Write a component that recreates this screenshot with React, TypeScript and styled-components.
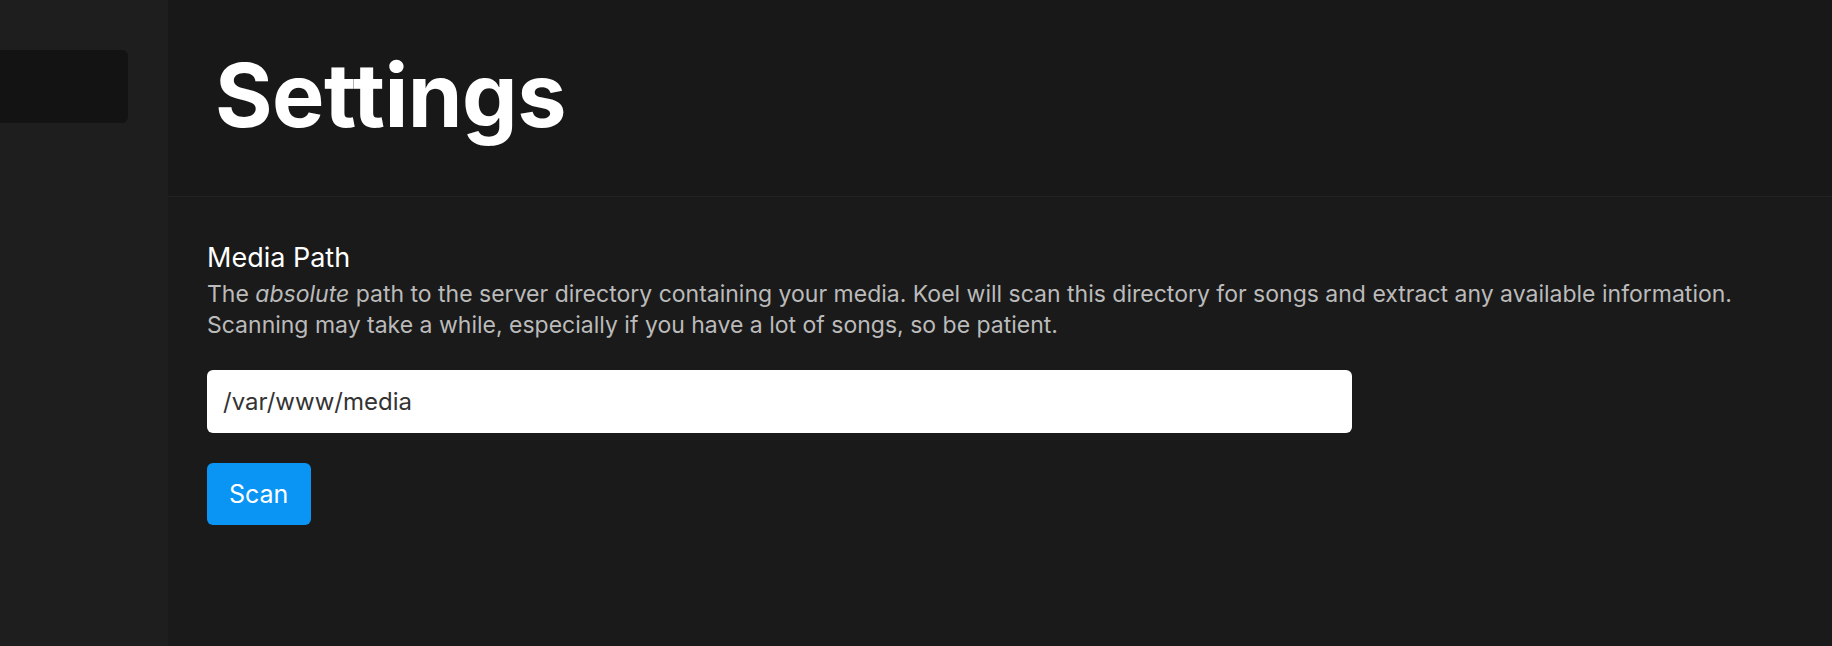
import React from "react";
import styled, { createGlobalStyle } from "styled-components";

const GlobalStyle = createGlobalStyle`
  * {
    box-sizing: border-box;
  }
  html, body {
    margin: 0;
    padding: 0;
    background: #1a1a1a;
  }
  body {
    font-family: Inter, "Noto Sans", sans-serif;
    -webkit-font-smoothing: antialiased;
  }
`;

const Layout = styled.div`
  display: flex;
  height: 100vh;
  overflow: hidden;
`;

const Sidebar = styled.aside`
  width: 168px;
  flex-shrink: 0;
  background: #1e1e1e;
  padding-top: 50px;
`;

const SearchBox = styled.div`
  width: 128px;
  height: 73px;
  background: #131313;
  border-radius: 0 6px 6px 0;
`;

const Main = styled.main`
  flex: 1;
  display: flex;
  flex-direction: column;
  background: #1a1a1a;
`;

const Header = styled.header`
  height: 197px;
  display: flex;
  align-items: center;
  padding-left: 47px;
  background: #181818;
  border-bottom: 1px solid #232323;
`;

const Title = styled.h1`
  margin: 0;
  color: #ffffff;
  font-size: 88px;
  font-weight: 700;
  letter-spacing: -0.5px;
  line-height: 1;
  padding-bottom: 6px;
`;

const Content = styled.section`
  padding: 42px 39px;
`;

const Label = styled.label`
  display: block;
  color: #ffffff;
  font-size: 27px;
  font-weight: 400;
  line-height: 37px;
`;

const Help = styled.p`
  margin: 0;
  padding-top: 3px;
  color: #bbbbbb;
  font-size: 23px;
  line-height: 31px;

  em {
    font-style: italic;
  }
`;

const PathInput = styled.input`
  display: block;
  width: 1145px;
  height: 63px;
  margin-top: 29px;
  padding: 0 16px;
  border: 0;
  border-radius: 6px;
  background: #ffffff;
  color: #333333;
  font-family: Inter, "Noto Sans", sans-serif;
  font-size: 24px;
  outline: none;
`;

const Button = styled.button`
  display: block;
  margin-top: 30px;
  height: 62px;
  padding: 0 23px 0 22px;
  border: 0;
  border-radius: 6px;
  background: #0a95f5;
  color: #ffffff;
  font-family: Inter, "Noto Sans", sans-serif;
  font-size: 25px;
  cursor: pointer;
`;

const App: React.FC = () => {
  return (
    <>
      <GlobalStyle />
      <Layout>
        <Sidebar>
          <SearchBox />
        </Sidebar>
        <Main>
          <Header>
            <Title>Settings</Title>
          </Header>
          <Content>
            <Label htmlFor="mediaPath">Media Path</Label>
            <Help>
              The <em>absolute</em> path to the server directory containing your media. Koel will
              scan this directory for songs and extract any available information.
              <br />
              Scanning may take a while, especially if you have a lot of songs, so be patient.
            </Help>
            <PathInput id="mediaPath" defaultValue="/var/www/media" />
            <Button type="button">Scan</Button>
          </Content>
        </Main>
      </Layout>
    </>
  );
};

export default App;
